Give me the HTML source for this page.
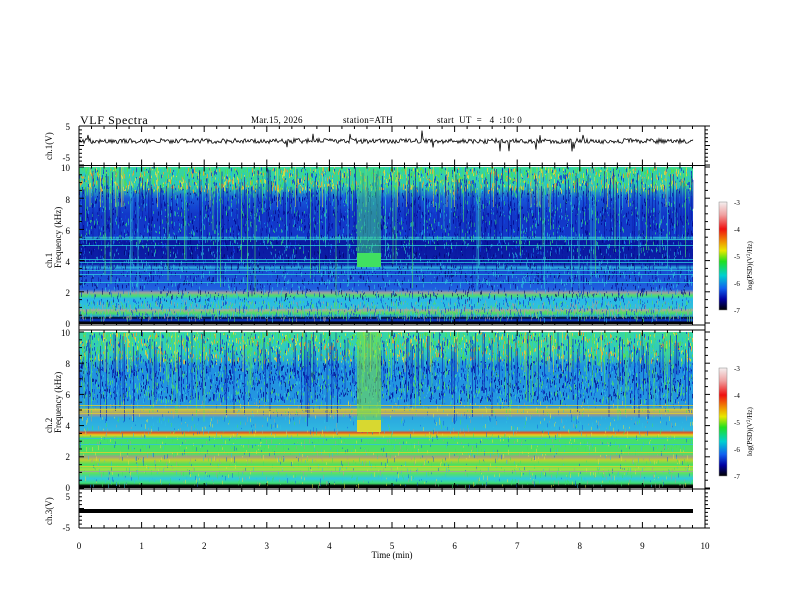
<!DOCTYPE html>
<html><head><meta charset="utf-8">
<style>
html,body{margin:0;padding:0;background:#fff;}
svg{display:block;font-family:"Liberation Serif",serif;}
</style></head><body>
<svg id="s" width="792" height="612" viewBox="0 0 792 612" xmlns="http://www.w3.org/2000/svg">
<defs>
<linearGradient id="g1" x1="0" y1="0" x2="0" y2="1">
<stop offset="0" stop-color="#38d898"/>
<stop offset="0.12" stop-color="#30c8b0"/>
<stop offset="0.2" stop-color="#1858d8"/>
<stop offset="0.3" stop-color="#1238c8"/>
<stop offset="0.44" stop-color="#1238c8"/>
<stop offset="0.45" stop-color="#30b8d8"/>
<stop offset="0.47" stop-color="#0a18a0"/>
<stop offset="0.62" stop-color="#0c20a8"/>
<stop offset="0.64" stop-color="#30b0e0"/>
<stop offset="0.66" stop-color="#1848d0"/>
<stop offset="0.78" stop-color="#2060e0"/>
<stop offset="0.8" stop-color="#a0a0a0"/>
<stop offset="0.82" stop-color="#48e070"/>
<stop offset="0.84" stop-color="#28b8e8"/>
<stop offset="0.9" stop-color="#30c0d8"/>
<stop offset="0.91" stop-color="#a8a8a0"/>
<stop offset="0.93" stop-color="#50e060"/>
<stop offset="0.95" stop-color="#28a0d0"/>
<stop offset="0.96" stop-color="#000820"/>
<stop offset="0.975" stop-color="#1040e0"/>
<stop offset="0.99" stop-color="#000"/>
<stop offset="1" stop-color="#000"/>
</linearGradient>
<linearGradient id="g2" x1="0" y1="0" x2="0" y2="1">
<stop offset="0" stop-color="#38d8a0"/>
<stop offset="0.14" stop-color="#30c8c0"/>
<stop offset="0.22" stop-color="#2090e0"/>
<stop offset="0.48" stop-color="#2598e0"/>
<stop offset="0.5" stop-color="#c8c040"/>
<stop offset="0.53" stop-color="#909898"/>
<stop offset="0.55" stop-color="#2aa8e0"/>
<stop offset="0.63" stop-color="#30b8e0"/>
<stop offset="0.645" stop-color="#e05020"/>
<stop offset="0.66" stop-color="#e8d020"/>
<stop offset="0.68" stop-color="#40e070"/>
<stop offset="0.78" stop-color="#50e060"/>
<stop offset="0.8" stop-color="#a0a080"/>
<stop offset="0.82" stop-color="#c0d030"/>
<stop offset="0.85" stop-color="#48e060"/>
<stop offset="0.88" stop-color="#a0e040"/>
<stop offset="0.91" stop-color="#50e070"/>
<stop offset="0.94" stop-color="#30c8e0"/>
<stop offset="0.97" stop-color="#40e070"/>
<stop offset="0.985" stop-color="#000"/>
<stop offset="1" stop-color="#000"/>
</linearGradient>
<linearGradient id="cb" x1="0" y1="0" x2="0" y2="1">
<stop offset="0" stop-color="#f4f0f0"/>
<stop offset="0.12" stop-color="#f0a0a0"/>
<stop offset="0.25" stop-color="#f01010"/>
<stop offset="0.38" stop-color="#f0a000"/>
<stop offset="0.45" stop-color="#e8e800"/>
<stop offset="0.55" stop-color="#20e020"/>
<stop offset="0.68" stop-color="#00d0d0"/>
<stop offset="0.8" stop-color="#1060f0"/>
<stop offset="0.9" stop-color="#0000a0"/>
<stop offset="1" stop-color="#000"/>
</linearGradient>
</defs>
<text x="80" y="124" font-size="12" letter-spacing="0.6">VLF  Spectra</text>
<text x="251" y="123" font-size="9" letter-spacing="0.3">Mar.15, 2026</text>
<text x="343" y="123" font-size="9" letter-spacing="0.3">station=ATH</text>
<text x="437" y="123" font-size="9" letter-spacing="0.3" xml:space="preserve">start  UT  =   4  :10: 0</text>

<rect x="79" y="167" width="614" height="157" fill="url(#g1)"/>
<rect x="79" y="332" width="614" height="156" fill="url(#g2)"/>
<g id="st1"></g><g id="st2"></g>
<rect x="357" y="253" width="24" height="14" fill="#40e060"/>
<rect x="357" y="420" width="24" height="12" fill="#d8d830"/>

<rect x="719" y="202" width="8" height="108" fill="url(#cb)" stroke="#888" stroke-width="0.5"/>
<rect x="719" y="368" width="8" height="108" fill="url(#cb)" stroke="#888" stroke-width="0.5"/>
<g font-size="7" fill="#000">
<text x="734" y="205">-3</text><text x="734" y="232">-4</text><text x="734" y="259">-5</text><text x="734" y="286">-6</text><text x="734" y="313">-7</text>
<text x="734" y="371">-3</text><text x="734" y="398">-4</text><text x="734" y="425">-5</text><text x="734" y="452">-6</text><text x="734" y="479">-7</text>
<text transform="translate(752,290) rotate(-90)" font-size="7">log(PSD)(V<tspan font-size="5" dy="-2">2</tspan><tspan dy="2">/Hz)</tspan></text>
<text transform="translate(752,456) rotate(-90)" font-size="7">log(PSD)(V<tspan font-size="5" dy="-2">2</tspan><tspan dy="2">/Hz)</tspan></text>
</g>
<g stroke="#000" stroke-width="1" fill="none" id="ax">
<line x1="79" y1="126" x2="705" y2="126"/>
<line x1="79" y1="165.5" x2="705" y2="165.5"/>
<line x1="79" y1="325" x2="705" y2="325"/>
<line x1="79" y1="330" x2="705" y2="330"/>
<line x1="79" y1="489" x2="705" y2="489"/>
<line x1="79" y1="528" x2="705" y2="528"/>
<line x1="79" y1="126" x2="79" y2="528"/>
<line x1="705" y1="126" x2="705" y2="528"/>
<rect x="79" y="509" width="614" height="4" fill="#000" stroke="none"/>
</g>
<polyline id="tr" fill="none" stroke="#000" stroke-width="0.8" points=""/>
<g font-size="9" text-anchor="end">
<text x="70" y="130">5</text><text x="70" y="161">-5</text>
<text x="70" y="171">10</text><text x="70" y="203">8</text><text x="70" y="234">6</text><text x="70" y="265">4</text><text x="70" y="296">2</text><text x="70" y="327">0</text>
<text x="70" y="336">10</text><text x="70" y="367">8</text><text x="70" y="398">6</text><text x="70" y="429">4</text><text x="70" y="460">2</text><text x="70" y="491">0</text>
<text x="70" y="500">5</text><text x="70" y="531">-5</text>
</g>
<g font-size="9">
<text transform="translate(52,160) rotate(-90)">ch.1(V)</text>
<text transform="translate(52,268) rotate(-90)">ch.1</text>
<text transform="translate(61,268) rotate(-90)">Frequency  (kHz)</text>
<text transform="translate(52,433) rotate(-90)">ch.2</text>
<text transform="translate(61,433) rotate(-90)">Frequency  (kHz)</text>
<text transform="translate(52,525) rotate(-90)">ch.3(V)</text>
</g>
<g font-size="9" text-anchor="middle" id="xl"></g>
<text x="392" y="558" font-size="9" text-anchor="middle">Time  (min)</text>
</svg>
<script>
var NS="http://www.w3.org/2000/svg",s=document.getElementById('s');
function el(p,t,a){var e=document.createElementNS(NS,t);for(var k in a)e.setAttribute(k,a[k]);p.appendChild(e);return e;}
var seed=7;function r(){seed=(seed*16807)%2147483647;return seed/2147483647;}
function pick(a){return a[Math.floor(r()*a.length)];}
var st1=document.getElementById('st1'),st2=document.getElementById('st2');
// speckle segments
function speck(g,y0,y1,pal,n,op){for(var x=79;x<693;x+=1){for(var k=0;k<n;k++){var y=y0+r()*(y1-y0);el(g,'rect',{x:x,y:y.toFixed(1),width:1,height:(1+r()*4).toFixed(1),fill:pick(pal),opacity:op});}}}
speck(st1,167,190,['#e0e040','#40e060','#20c0e0','#60e040','#1040d0','#f0a030'],4,0.8);
speck(st1,190,250,['#0a10a0','#1040e0','#20a0e0','#000080','#30d080'],5,0.7);
speck(st1,250,300,['#0a10a0','#1860e0','#30c0e0','#000060'],4,0.6);
speck(st1,300,318,['#30c0e0','#50e060','#1040d0','#a0a0a0'],3,0.6);
speck(st2,332,360,['#e0e040','#40e060','#20c0e0','#60e040','#1040d0','#f0a030'],4,0.8);
speck(st2,360,400,['#0a20b0','#1060e0','#30c0e0','#50e060','#000080'],5,0.7);
speck(st2,400,485,['#40e060','#e0e040','#30c0e0','#a0a090','#1060e0'],3,0.5);
// vertical stripes
for(var x=79;x<693;x+=1.5){var v=r();
 if(v<0.3){el(st1,'rect',{x:x,y:167+r()*25,width:1,height:20+r()*90,fill:'#0a14a0',opacity:0.6});}
 else if(v<0.45){el(st1,'rect',{x:x,y:167,width:1,height:30+r()*120,fill:r()<0.5?'#50e060':'#30c8d0',opacity:0.6});}
 else if(v<0.5){el(st1,'rect',{x:x,y:167,width:1,height:40,fill:'#e0e040',opacity:0.5});}
 v=r();
 if(v<0.3){el(st2,'rect',{x:x,y:332+r()*20,width:1,height:20+r()*60,fill:'#0a20b0',opacity:0.6});}
 else if(v<0.45){el(st2,'rect',{x:x,y:332,width:1,height:30+r()*60,fill:'#50e060',opacity:0.6});}
 else if(v<0.5){el(st2,'rect',{x:x,y:332,width:1,height:40,fill:'#e0e040',opacity:0.5});}
}
// horizontal thin lines
[239,245,259,262,270,274,282].forEach(function(y){el(st1,'rect',{x:79,y:y,width:614,height:1,fill:'#30c8e0',opacity:0.8});});
[405,409,413,438,444,452,466,471].forEach(function(y){el(st2,'rect',{x:79,y:y,width:614,height:1,fill:pick(['#a0a0a0','#e0d030','#30c0e0']),opacity:0.8});});
el(st1,'rect',{x:357,y:167,width:24,height:90,fill:'#40d880',opacity:0.5});
el(st2,'rect',{x:357,y:332,width:24,height:90,fill:'#70e050',opacity:0.6});
var pts=[];for(var x=79;x<=693;x+=1){var y=141+(r()-0.5)*5;if(r()<0.02)y+=(r()<0.5?-1:1)*8;pts.push(x+','+y.toFixed(1));}
document.getElementById('tr').setAttribute('points',pts.join(' '));
var ax=document.getElementById('ax'),xl=document.getElementById('xl');
var bounds=[[126,165.5],[165.5,325],[330,489],[489,528]];
for(var i=0;i<=50;i++){var X=79+i*12.52,L=i%5==0?6:3;
 bounds.forEach(function(b){el(ax,'line',{x1:X,y1:b[0],x2:X,y2:b[0]+L});el(ax,'line',{x1:X,y1:b[1]-L,x2:X,y2:b[1]});});
 if(i%5==0){var t=el(xl,'text',{x:X,y:549});t.textContent=i/5;}
}
for(var k=0;k<=20;k++){var L=k%4==0?5:3;[[167,323],[332,488]].forEach(function(b){var Y=b[1]-(b[1]-b[0])*k/20;el(ax,'line',{x1:79,y1:Y,x2:79+L,y2:Y});el(ax,'line',{x1:705,y1:Y,x2:705+L,y2:Y});});}
[[126,165],[489,528]].forEach(function(b){for(var k=0;k<=10;k++){var Y=b[0]+(b[1]-b[0])*k/10;var L=k%5==0?5:3;el(ax,'line',{x1:79,y1:Y,x2:79+L,y2:Y});el(ax,'line',{x1:705,y1:Y,x2:705+L,y2:Y});}});
</script>
</body></html>
